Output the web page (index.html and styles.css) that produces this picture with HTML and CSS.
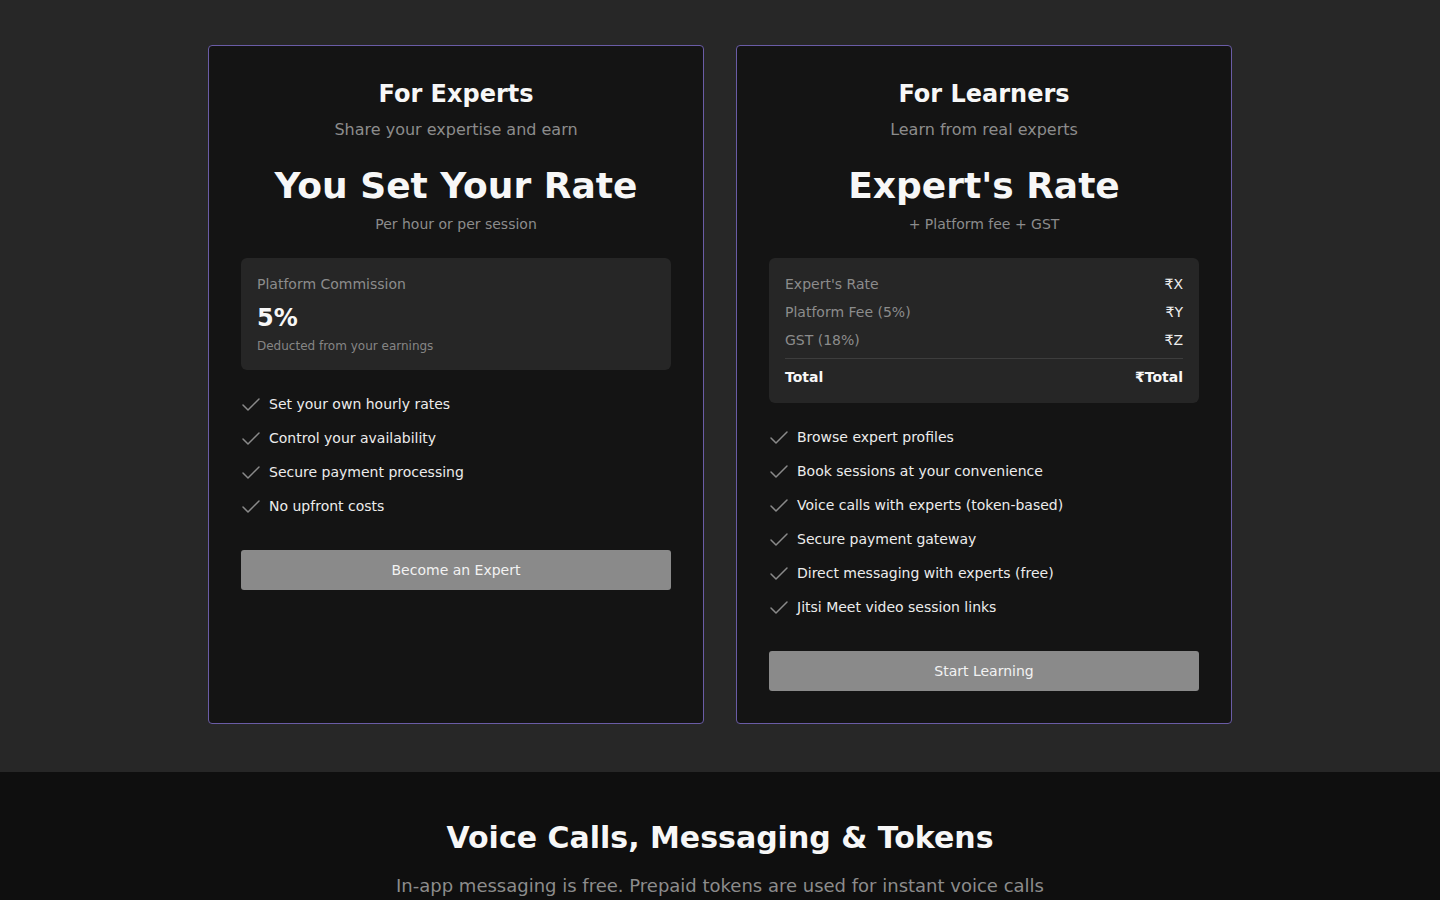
FILE: index.html
```html
<!DOCTYPE html>
<html lang="en">
<head>
<meta charset="utf-8">
<title>Pricing</title>
<link rel="stylesheet" href="styles.css">
</head>
<body>
<section class="pricing">
  <div class="grid">
    <div class="card">
      <h3 class="card-title">For Experts</h3>
      <p class="card-sub">Share your expertise and earn</p>
      <div class="rate">You Set Your Rate</div>
      <p class="rate-note">Per hour or per session</p>
      <div class="box">
        <div class="box-label">Platform Commission</div>
        <div class="box-value">5%</div>
        <div class="box-note">Deducted from your earnings</div>
      </div>
      <ul class="features">
        <li><svg class="check" viewBox="2 1 20 20"><path d="M20 6 9 17l-5-5"/></svg><span>Set your own hourly rates</span></li>
        <li><svg class="check" viewBox="2 1 20 20"><path d="M20 6 9 17l-5-5"/></svg><span>Control your availability</span></li>
        <li><svg class="check" viewBox="2 1 20 20"><path d="M20 6 9 17l-5-5"/></svg><span>Secure payment processing</span></li>
        <li><svg class="check" viewBox="2 1 20 20"><path d="M20 6 9 17l-5-5"/></svg><span>No upfront costs</span></li>
      </ul>
      <button class="btn">Become an Expert</button>
    </div>
    <div class="card">
      <h3 class="card-title">For Learners</h3>
      <p class="card-sub">Learn from real experts</p>
      <div class="rate">Expert's Rate</div>
      <p class="rate-note">+ Platform fee + GST</p>
      <div class="box">
        <div class="row"><span>Expert's Rate</span><span class="amt">₹X</span></div>
        <div class="row"><span>Platform Fee (5%)</span><span class="amt">₹Y</span></div>
        <div class="row"><span>GST (18%)</span><span class="amt">₹Z</span></div>
        <div class="row total"><span>Total</span><span>₹Total</span></div>
      </div>
      <ul class="features">
        <li><svg class="check" viewBox="2 1 20 20"><path d="M20 6 9 17l-5-5"/></svg><span>Browse expert profiles</span></li>
        <li><svg class="check" viewBox="2 1 20 20"><path d="M20 6 9 17l-5-5"/></svg><span>Book sessions at your convenience</span></li>
        <li><svg class="check" viewBox="2 1 20 20"><path d="M20 6 9 17l-5-5"/></svg><span>Voice calls with experts (token-based)</span></li>
        <li><svg class="check" viewBox="2 1 20 20"><path d="M20 6 9 17l-5-5"/></svg><span>Secure payment gateway</span></li>
        <li><svg class="check" viewBox="2 1 20 20"><path d="M20 6 9 17l-5-5"/></svg><span>Direct messaging with experts (free)</span></li>
        <li><svg class="check" viewBox="2 1 20 20"><path d="M20 6 9 17l-5-5"/></svg><span>Jitsi Meet video session links</span></li>
      </ul>
      <button class="btn">Start Learning</button>
    </div>
  </div>
</section>
<section class="tokens">
  <h2 class="tokens-title">Voice Calls, Messaging &amp; Tokens</h2>
  <p class="tokens-sub">In-app messaging is free. Prepaid tokens are used for instant voice calls</p>
</section>
</body>
</html>
```

FILE: styles.css
```css
* { box-sizing: border-box; margin: 0; padding: 0; }
html, body { background: #272727; }
body {
  font-family: "DejaVu Sans", sans-serif;
  color: #f5f5f5;
}
.pricing {
  padding: 45px 0 48px;
}
.grid {
  width: 1024px;
  margin: 0 auto;
  display: grid;
  grid-template-columns: 1fr 1fr;
  gap: 32px;
}
.card {
  background: #141414;
  border: 1px solid #6a5ca6;
  border-radius: 4px;
  padding: 32px;
  display: flex;
  flex-direction: column;
}
.card-title {
  text-align: center;
  font-size: 24px;
  line-height: 32px;
  font-weight: 700;
  color: #f7f7f7;
}
.card-sub {
  text-align: center;
  margin-top: 8px;
  font-size: 16px;
  line-height: 24px;
  color: #8c8c8c;
}
.rate {
  text-align: center;
  margin-top: 24px;
  font-size: 36px;
  line-height: 40px;
  font-weight: 700;
  color: #f7f7f7;
}
.rate-note {
  text-align: center;
  margin-top: 8px;
  font-size: 14px;
  line-height: 20px;
  color: #8c8c8c;
}
.box {
  margin-top: 24px;
  background: #262626;
  border-radius: 6px;
  padding: 16px;
  display: flex;
  flex-direction: column;
}
.box-label {
  font-size: 14px;
  line-height: 20px;
  color: #8c8c8c;
}
.box-value {
  margin-top: 8px;
  font-size: 24px;
  line-height: 32px;
  font-weight: 700;
  color: #f7f7f7;
}
.box-note {
  margin-top: 4px;
  font-size: 12px;
  line-height: 16px;
  color: #858585;
}
.row {
  display: flex;
  justify-content: space-between;
  font-size: 14px;
  line-height: 20px;
  color: #8c8c8c;
}
.row + .row { margin-top: 8px; }
.row .amt { color: #ededed; }
.row.total {
  border-top: 1px solid #3d3d3d;
  padding-top: 8px;
  font-weight: 700;
  color: #f7f7f7;
}
.features {
  list-style: none;
  margin-top: 24px;
  display: flex;
  flex-direction: column;
  gap: 14px;
}
.features li {
  display: flex;
  align-items: flex-start;
  gap: 8px;
  font-size: 14px;
  line-height: 20px;
  color: #ececec;
}
.check {
  width: 20px;
  height: 20px;
  flex: none;
  fill: none;
  stroke: #8a8a8a;
  stroke-width: 1.5;
  stroke-linecap: round;
  stroke-linejoin: round;
}
.btn {
  margin-top: 34px;
  height: 40px;
  width: 100%;
  border: none;
  border-radius: 3px;
  background: #8a8a8a;
  color: #f2f2f2;
  font-family: "DejaVu Sans", sans-serif;
  font-size: 14px;
}
.tokens {
  background: #0f0f0f;
  padding: 48px 0 40px;
  text-align: center;
}
.tokens-title {
  font-size: 30px;
  line-height: 36px;
  font-weight: 700;
  color: #f7f7f7;
}
.tokens-sub {
  margin-top: 16px;
  font-size: 18px;
  line-height: 28px;
  color: #8c8c8c;
}
```
